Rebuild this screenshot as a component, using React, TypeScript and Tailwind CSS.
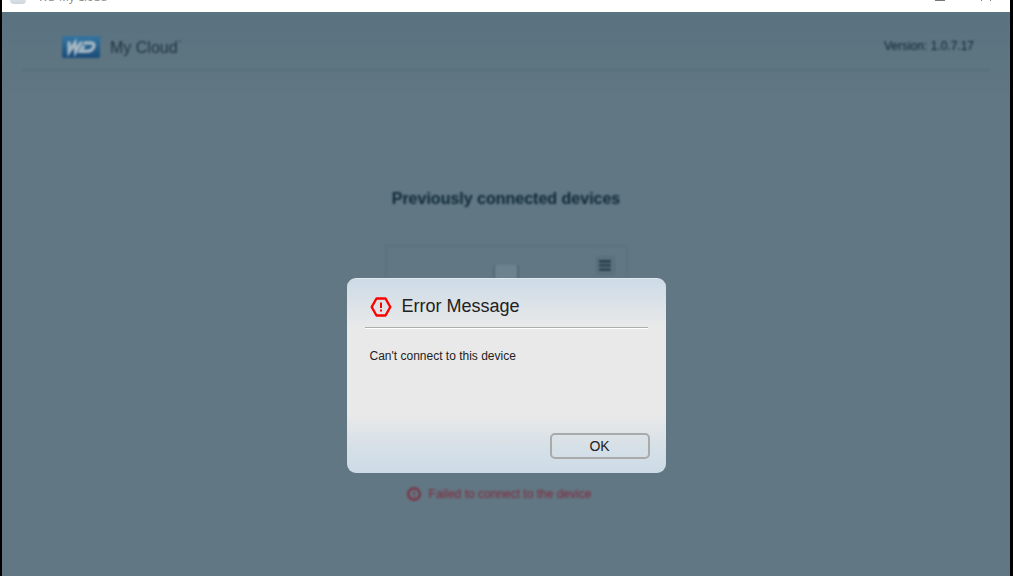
export default function App() {
  return (
    <div className="relative flex h-screen flex-col overflow-hidden border-l-2 border-r-3 border-black bg-[#617783] font-['Liberation_Sans',Arial,sans-serif]">
      <TitleBar />
      <div className="flex flex-1 flex-col bg-linear-to-b from-[#5a7280] to-[#617783] to-15% blur-[1px]">
        <Header version="1.0.7.17" />
        <Devices />
      </div>
      <ErrorDialog title="Error Message" message="Can't connect to this device" />
    </div>
  );
}

function TitleBar() {
  return (
    <div className="relative z-10 flex h-3 shrink-0 items-end justify-between overflow-hidden bg-white pr-4 pb-2 pl-2">
      <div className="flex items-end gap-3">
        <span className="h-4 w-4 rounded-sm bg-linear-to-b from-white to-[#ccd6dd]"></span>
        <span className="-mb-px font-['Open_Sans',sans-serif] text-[11px] leading-4 text-[#888888]">WD My Cloud</span>
      </div>
      <svg className="mb-[3px] h-3 w-[60px]" viewBox="0 0 60 12" fill="none" stroke="#777">
        <path d="M1 11.5h10M1 2.5h10M1.5 2v10M10.5 2v10M47 2l10 10M57 2l-10 10" />
      </svg>
    </div>
  );
}

function Header(props: { version: string }) {
  return (
    <header className="mx-5 flex h-[59px] shrink-0 items-center justify-between border-b-2 border-[#576e7b] pt-[13px] pr-4 pl-10">
      <div className="flex items-center gap-2">
        <WdLogo />
        <span className="flex items-start pt-px text-base text-[#20343f]">
          My Cloud
          <span className="pt-1 text-[4px] leading-none">™</span>
        </span>
      </div>
      <span className="pb-[3px] text-xs text-[#10242f]">Version: {props.version}</span>
    </header>
  );
}

function WdLogo() {
  return (
    <svg className="h-[23px] w-10" viewBox="0 0 40 23" aria-label="WD">
      <defs>
        <linearGradient id="wd" x1="0" y1="0" x2="0" y2="1">
          <stop offset="0" stopColor="#3476a2" />
          <stop offset="1" stopColor="#1a4b78" />
        </linearGradient>
      </defs>
      <rect width="38" height="22" rx="1.5" fill="url(#wd)" />
      <g fill="none" stroke="#a3b6c2" strokeWidth="3.4">
        <path d="M7 5.5 7.2 15.5 13 7 13.7 15.5 19.5 5.5" />
        <path d="M21.5 7H29C33 7 32.5 11 30.5 13C29.2 14.8 27.5 15.2 25 15.2H18.500L22 9.500" />
      </g>
      <circle cx="39" cy="1.5" r="1" fill="#3c6784" />
    </svg>
  );
}

function Devices() {
  return (
    <main className="flex flex-col items-center">
      <h1 className="mt-[116px] text-base leading-6 font-bold text-[#0f2836]">Previously connected devices</h1>
      <div className="mt-[34px] flex h-[216px] w-[243px] justify-end border-2 border-[#5b727f] p-[9px] pr-[11px]">
        <DeviceIcon />
        <button aria-label="Device menu" className="ml-[76px] flex h-[19px] w-[19px] items-center justify-center rounded-sm border-2 border-[#566d7b]">
          <svg className="h-[11px] w-3" viewBox="0 0 12 11" fill="#1e3542">
            <path d="M0 0h12v2.4H0zM0 4.2h12v2.400H0zM0 8.400h12v2.400H0z" />
          </svg>
        </button>
      </div>
      <div className="mt-[25px] flex items-center gap-2 pr-[14px] text-[#832639]">
        <svg className="h-[14px] w-[14px]" viewBox="0 0 14 14" fill="none" stroke="currentColor">
          <circle cx="7" cy="7" r="5.8" strokeWidth="2" />
          <path d="M7 4v4M7 9v1.5" strokeWidth="1.2" />
        </svg>
        <span className="text-xs leading-4">Failed to connect to the device</span>
      </div>
    </main>
  );
}

function DeviceIcon() {
  return (
    <svg className="mt-2 h-[70px] w-[28px]" viewBox="0 0 28 70">
      <rect x="1" y="1" width="26" height="68" rx="2" fill="#526976" />
      <rect x="3" y="1" width="22" height="67" rx="1" fill="#6c828e" />
    </svg>
  );
}

function ErrorDialog(props: { title: string; message: string }) {
  return (
    <div className="absolute inset-0 z-20 flex items-start justify-center pt-[278px]">
      <div role="alertdialog" aria-labelledby="error-title" className="flex h-[195px] w-[319px] flex-col rounded-[9px] border-t border-[#e3eaef] bg-[linear-gradient(#cddbe6,#e9e9e9_25%,#e9e9e9_70%,#d7e0e7_86%,#cddbe6)] px-4 pb-[14px]">
        <div className="mx-[2px] flex h-[49px] items-center gap-[10px] border-b border-[#adadad] pt-2 pl-[5px] shadow-[0_1px_0_#ffffff]">
          <svg className="h-[22px] w-[22px]" viewBox="0 0 22 22" fill="none" stroke="#ff0000">
            <path d="M6.5 2.5h9L20.3 11l-4.8 8.5h-9L1.7 11z" strokeWidth="2.4" strokeLinejoin="round" />
            <path d="M11 6.5v5.5M11 13.5v2" strokeWidth="2" />
          </svg>
          <h2 id="error-title" className="pb-[3px] text-lg leading-6 text-[#222222]">{props.title}</h2>
        </div>
        <p className="mt-5 pl-[7px] text-xs leading-4 text-[#222222]">{props.message}</p>
        <button className="mt-auto h-[26px] w-[100px] self-end rounded-[5px] border-2 border-[#aaaaaa] text-sm leading-5 text-[#222222]">OK</button>
      </div>
    </div>
  );
}
